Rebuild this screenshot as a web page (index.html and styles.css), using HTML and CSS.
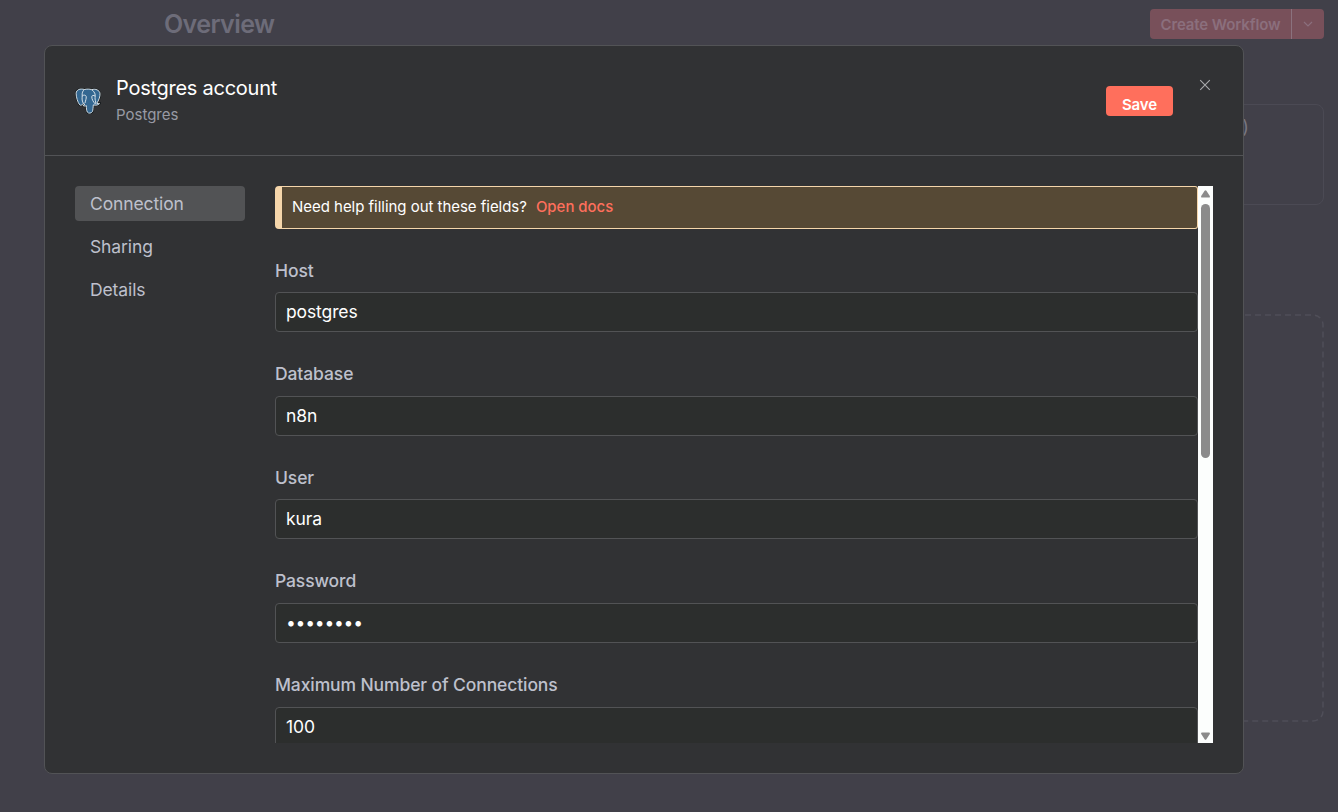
FILE: index.html
```html
<!DOCTYPE html>
<html lang="en">
<head>
<meta charset="utf-8">
<title>Postgres account</title>
<link rel="stylesheet" href="styles.css">
</head>
<body>
<div class="page">
  <header class="page-header">
    <h1 class="page-title">Overview</h1>
    <div class="create">
      <span class="create-label">Create Workflow</span>
      <span class="create-more"><svg width="10" height="6" viewBox="0 0 10 6"><path d="M1 1l4 4 4-4" fill="none" stroke="currentColor" stroke-width="1.2"/></svg></span>
    </div>
  </header>
  <section class="summary"><span class="summary-unit">)</span></section>
  <section class="empty"><svg class="empty-frame"><rect x="1" y="1" width="1158" height="406" rx="10"/></svg></section>
</div>

<div class="modal">
  <header class="modal-header">
    <svg class="logo" width="26" height="26" viewBox="0 0 26 26">
      <path d="M9.500 1.500C5 .2 1.300 1.700 1.100 5.300c-.1 3.200 1.700 9.500 3.600 11.500 1.300 1.300 2.600-.3 3.700-1.300.5.500.9.700 1.600.7-.3.700-1.500.8-2.100 1.200 1 .9 2.500.8 3.400.2.100 2.400.1 4.700 1 6.500 1.100 1.700 4.300 1.300 5.200-.7.500-1.500.6-3.800.8-6.500 2.800.7 5.300.1 6.200-1.300-1 .2-2 .1-2.700-.3 2-2.800 3.600-7.200 3.200-10C24.500 2.200 20.500.4 16.800 1.700c-2.300-.8-5-.8-7.300-.2z" fill="#336791" stroke="#111719" stroke-width="2"/>
      <path d="M9.500 1.500C5 .2 1.300 1.700 1.100 5.300c-.1 3.200 1.700 9.500 3.600 11.500 1.300 1.300 2.600-.3 3.700-1.300.5.500.9.700 1.600.7-.3.700-1.500.8-2.100 1.200 1 .9 2.500.8 3.400.2.100 2.400.1 4.700 1 6.500 1.100 1.700 4.300 1.300 5.200-.7.500-1.500.6-3.800.8-6.500 2.800.7 5.300.1 6.200-1.300-1 .2-2 .1-2.700-.3 2-2.800 3.600-7.200 3.200-10C24.500 2.200 20.500.4 16.800 1.700c-2.300-.8-5-.8-7.300-.2z" fill="#336791" stroke="#e6edf2" stroke-width=".9"/>
      <path d="M9.500 1.500C7.500 3 7 5 7.200 7.500c.1 2.300-.8 4.500 1.200 8M7.200 8c1.500-1.400 3.600-1 4 .5.300 2-.7 4-1.200 6.500M16.800 1.700c2.700 2 4 4.800 3.300 7.800-.4 2 .9 4 .6 6.200M20 8c-1.300-.9-3-.7-3.200.6-.2 2.400 1.400 5.200 3.600 7.500" fill="none" stroke="#e6edf2" stroke-width=".9"/>
    </svg>
    <div class="heading">
      <h2 class="modal-title">Postgres account</h2>
      <div class="modal-subtitle">Postgres</div>
    </div>
    <button class="save">Save</button>
    <svg class="close" width="12" height="12" viewBox="0 0 12 12"><path d="M1.200 1.200l9.600 9.600M10.800 1.200l-9.600 9.600" stroke="#a9abac" stroke-width="1.100"/></svg>
  </header>
  <div class="modal-body">
    <nav class="menu">
      <div class="menu-item active">Connection</div>
      <div class="menu-item">Sharing</div>
      <div class="menu-item">Details</div>
    </nav>
    <div class="content">
      <div class="fields">
        <div class="notice"><span>Need help filling out these fields?</span><span class="docs">Open docs</span></div>
        <div class="field"><div class="label">Host</div><div class="input">postgres</div></div>
        <div class="field"><div class="label">Database</div><div class="input">n8n</div></div>
        <div class="field"><div class="label">User</div><div class="input">kura</div></div>
        <div class="field"><div class="label">Password</div><div class="input password">••••••••</div></div>
        <div class="field"><div class="label">Maximum Number of Connections</div><div class="input">100</div></div>
      </div>
      <div class="scrollbar">
        <svg width="9" height="8" viewBox="0 0 9 8"><path d="M3.600.8Q4.500-.2 5.400.8L8.800 6Q9.200 7.500 8 7.500H1Q-.2 7.500.2 6z" fill="#8b8b8b"/></svg>
        <div class="thumb"></div>
        <svg class="down" width="9" height="8" viewBox="0 0 9 8"><path d="M3.600 7.200Q4.500 8.200 5.400 7.200L8.800 2Q9.200.5 8 .5H1Q-.2.5.2 2z" fill="#8b8b8b"/></svg>
      </div>
    </div>
  </div>
</div>
</body>
</html>
```
FILE: styles.css
```css
* { box-sizing: border-box; }
body {
  margin: 0;
  width: 1338px;
  height: 812px;
  overflow: hidden;
  background: #414049;
  font-family: Inter, "Liberation Sans", sans-serif;
}
h1, h2 { margin: 0; }
.page { padding: 9px 14px 0 164px; }
.page-header { display: flex; justify-content: space-between; height: 30px; }
.page-title { font-size: 25px; line-height: 30px; font-weight: 600; letter-spacing: -.6px; color: #6d6c79; }
.create { display: flex; width: 174px; border-radius: 4px; overflow: hidden; background: #78505a; color: #8b6f7d; }
.create-label { width: 141px; text-align: center; font-size: 15px; line-height: 31px; font-weight: 600; letter-spacing: -.12px; }
.create-more { flex: 1; display: flex; align-items: center; justify-content: center; border-left: 1px solid #8b727e; }
.summary { height: 101px; margin-top: 65px; padding: 10px 74px 0 0; border: 1px solid #4b4a54; border-radius: 8px; text-align: right; }
.summary-unit { font-size: 18.5px; line-height: 22px; color: #777681; }
.empty { margin-top: 109px; height: 408px; }
.empty-frame { display: block; width: 1160px; height: 408px; }
.empty-frame rect { fill: none; stroke: #4f4e58; stroke-width: 1.5; stroke-dasharray: 6 4; }

.modal {
  position: absolute;
  left: 44px;
  top: 45px;
  width: 1200px;
  height: 729px;
  display: flex;
  flex-direction: column;
  background: #313234;
  border: 1px solid #525356;
  border-radius: 8px;
}
.modal-header { display: flex; height: 110px; padding: 30px 32px 0 30px; border-bottom: 1px solid #525356; }
.logo { margin-top: 11.500px; }
.heading { flex: 1; margin-left: 15px; }
.modal-title { font-size: 20px; line-height: 25px; font-weight: 400; letter-spacing: -.26px; color: #fff; }
.modal-subtitle { margin-top: 4px; font-size: 15px; line-height: 20px; color: #989aa4; }
.save {
  width: 67px;
  height: 30px;
  margin-top: 10px;
  padding: 8px 0 0;
  border: 0;
  border-radius: 4px;
  background: #ff6f5c;
  color: #fff;
  font: 600 15px/22px Inter, sans-serif;
  letter-spacing: -.1px;
}
.close { margin: 3px 0 0 26px; }
.modal-body { display: flex; flex: 1; padding: 30px 30px 30px; min-height: 0; }
.menu { width: 170px; margin-right: 30px; }
.menu-item { height: 35px; margin-bottom: 8px; padding-left: 15px; border-radius: 4px; font-size: 17.5px; line-height: 35px; letter-spacing: -.11px; color: #bec0cc; }
.menu-item.active { background: #525355; }
.content { display: flex; flex: 1; height: 557px; }
.fields { flex: 1; overflow: hidden; }
.notice {
  display: flex;
  gap: 9px;
  height: 43px;
  padding-left: 10px;
  border: 1px solid #f5d6ab;
  border-left-width: 7px;
  border-radius: 4px 3px 3px 4px;
  background: #564935;
  color: #fff;
  font-size: 15px;
  line-height: 39px;
  letter-spacing: -.03px;
  margin-bottom: 30.6px;
}
.docs { color: #ff6f5c; font-weight: 500; }
.field { height: 103.6px; }
.label { height: 32.55px; font-size: 17.5px; line-height: 22px; font-weight: 500; letter-spacing: -.11px; color: #bec0cc; }
.input { height: 40px; padding-left: 10px; border: 1px solid #525355; border-radius: 4px; background: #2c2e2d; color: #fff; font-size: 17.5px; line-height: 38px; letter-spacing: -.11px; }
.password { letter-spacing: -.25px; }
.scrollbar { width: 15px; display: flex; flex-direction: column; align-items: center; padding: 4px 0 3px; background: #fcfefd; }
.thumb { width: 9px; height: 254px; margin-top: 6px; border-radius: 5px; background: #8b8b8b; }
.down { margin-top: auto; }
```
